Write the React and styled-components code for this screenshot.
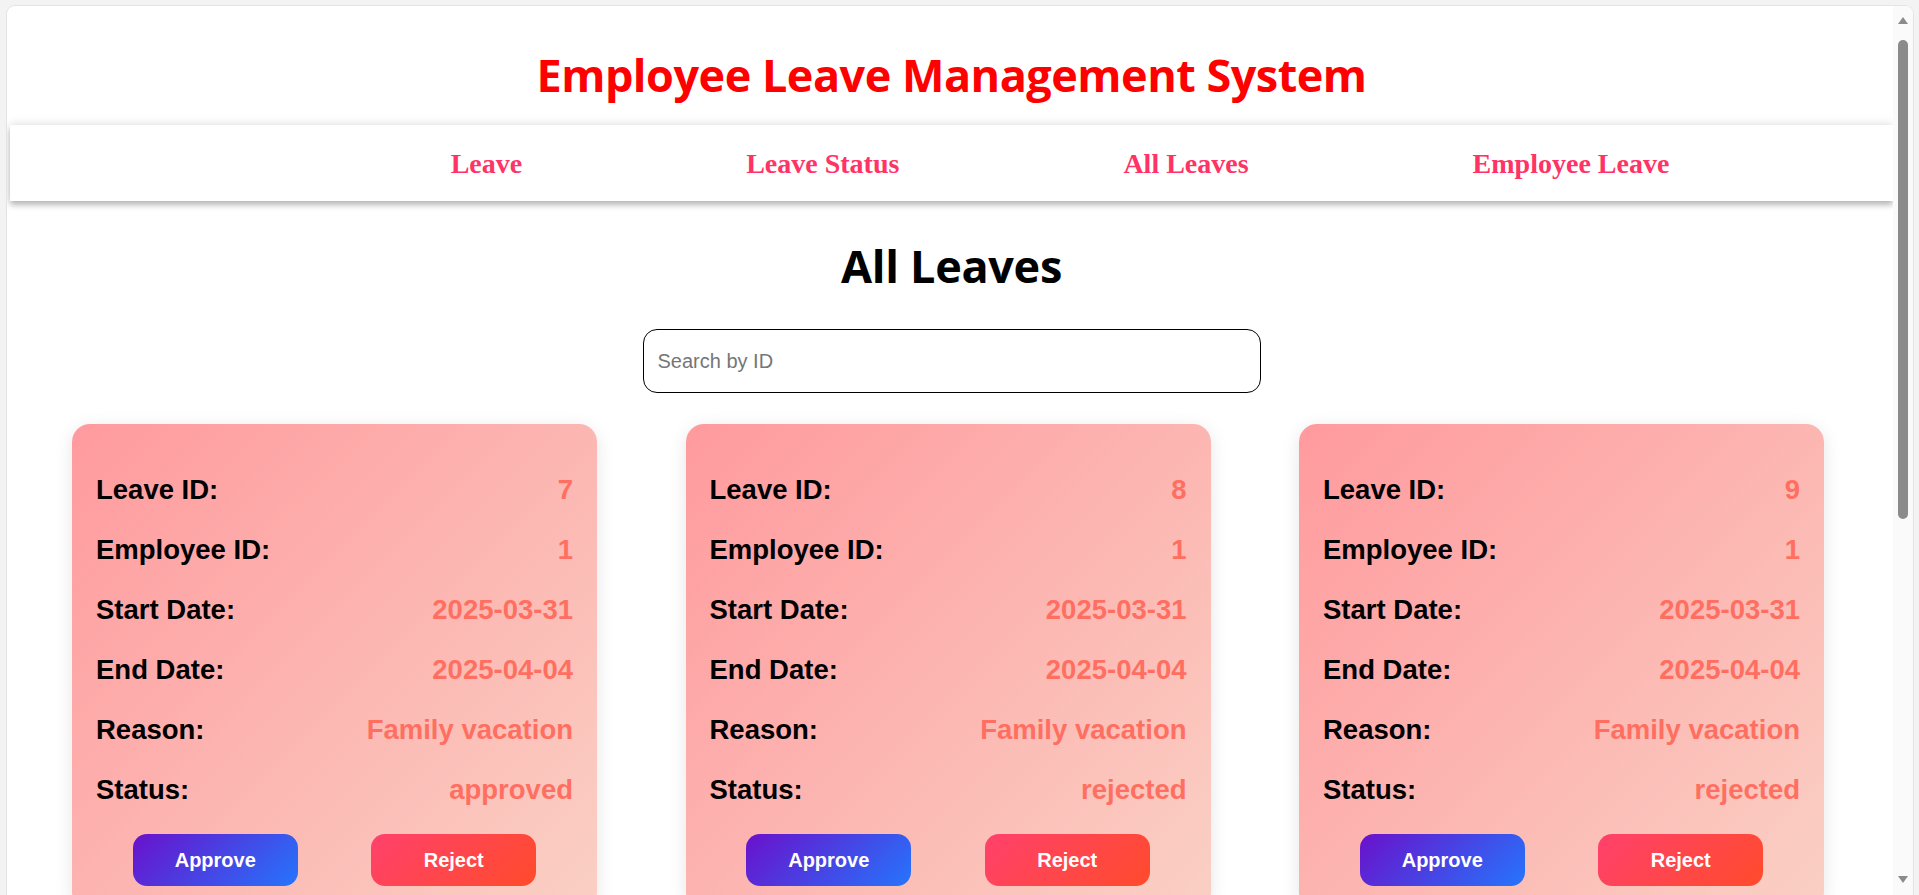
import React from "react";
import styled, { createGlobalStyle } from "styled-components";

const GlobalStyle = createGlobalStyle`
  html, body {
    margin: 0;
    padding: 0;
    height: 100%;
    overflow: hidden;
    background: #f3f3f3;
  }
  #root { height: 100%; }
  * { box-sizing: border-box; }
`;

const Frame = styled.div`
  margin: 5px 5px 0 6px;
  height: calc(100vh - 5px);
  display: flex;
  background: #ffffff;
  border: 1px solid #e4e4e4;
  border-bottom: none;
  border-radius: 9px 9px 0 0;
  overflow: hidden;
`;

const Viewport = styled.div`
  flex: 1;
  min-width: 0;
  height: 100%;
  overflow: hidden;
  padding-left: 3px;
`;

const ScrollRail = styled.div`
  width: 20px;
  flex: none;
  height: 100%;
  background: #fafafa;
  display: flex;
  flex-direction: column;
  align-items: center;
  padding: 11px 0 12px;
`;

const Arrow = styled.div`
  width: 0;
  height: 0;
  border-left: 5px solid transparent;
  border-right: 5px solid transparent;
  ${(p) =>
    p.$dir === "up"
      ? "border-bottom: 7px solid #8b8b8b;"
      : "border-top: 7px solid #8b8b8b; margin-top: auto;"}
`;

const Thumb = styled.div`
  margin-top: 16px;
  width: 10px;
  height: 479px;
  border-radius: 5px;
  background: #8b8b8b;
`;

const Header = styled.header`
  padding: 37px 0 18px;
  text-align: center;
`;

const Title = styled.h1`
  margin: 0;
  font-family: "Open Sans", "Noto Sans", sans-serif;
  font-weight: 700;
  font-size: 45px;
  letter-spacing: -0.5px;
  line-height: 64px;
  color: #ff0000;
`;

const Nav = styled.nav`
  height: 76px;
  display: flex;
  align-items: center;
  justify-content: center;
  gap: 224px;
  padding-left: 217px;
  padding-top: 2px;
  background: #ffffff;
  box-shadow: 0 4px 6px rgba(0, 0, 0, 0.28), 0 -3px 8px rgba(0, 0, 0, 0.08);
  position: relative;
`;

const NavLink = styled.a`
  font-family: "Liberation Serif", "Times New Roman", serif;
  font-weight: 700;
  font-size: 28px;
  color: #ff3366;
  text-decoration: none;
  cursor: pointer;
`;

const Main = styled.main`
  padding-top: 34px;
  display: flex;
  flex-direction: column;
  align-items: center;
`;

const Heading = styled.h2`
  margin: 0;
  font-family: "Open Sans", "Noto Sans", sans-serif;
  font-weight: 700;
  font-size: 45px;
  letter-spacing: -0.3px;
  line-height: 62px;
  color: #000000;
`;

const SearchInput = styled.input`
  margin: 32px 0 31px;
  width: 618px;
  height: 64px;
  padding: 0 14px;
  border: 1px solid #000000;
  border-radius: 14px;
  font-family: "Liberation Sans", Arial, sans-serif;
  font-size: 20px;
  color: #222;
  outline: none;
  &::placeholder {
    color: #767676;
  }
`;

const CardGrid = styled.div`
  align-self: stretch;
  display: grid;
  grid-template-columns: repeat(3, 525px);
  justify-content: space-between;
  row-gap: 40px;
  padding: 0 69px 0 62px;
`;

const Card = styled.div`
  padding: 24px;
  border-radius: 18px;
  background: linear-gradient(135deg, #ff9a9e 0%, #fad0c4 100%);
  box-shadow: 0 4px 18px rgba(0, 0, 0, 0.1);
  font-family: "Liberation Sans", Arial, sans-serif;
`;

const Rows = styled.div`
  padding-top: 26px;
  display: flex;
  flex-direction: column;
  gap: 28px;
`;

const Row = styled.div`
  display: flex;
  justify-content: space-between;
  align-items: center;
  font-size: 27.5px;
  line-height: 32px;
  font-weight: 700;
`;

const Label = styled.span`
  color: #000000;
`;

const Value = styled.span`
  color: #ff6f61;
  text-align: right;
`;

const Actions = styled.div`
  margin-top: 28px;
  display: flex;
  justify-content: space-around;
`;

const ActionButton = styled.button`
  width: 165px;
  height: 52px;
  border: none;
  border-radius: 14px;
  font-family: "Liberation Sans", Arial, sans-serif;
  font-weight: 700;
  font-size: 20px;
  color: #ffffff;
  cursor: pointer;
  background: ${(p) =>
    p.$variant === "approve"
      ? "linear-gradient(135deg, #6a11cb 0%, #2575fc 100%)"
      : "linear-gradient(135deg, #ff416c 0%, #ff4b2b 100%)"};
`;

const leaves = [
  { id: 7, emp: 1, start: "2025-03-31", end: "2025-04-04", reason: "Family vacation", status: "approved" },
  { id: 8, emp: 1, start: "2025-03-31", end: "2025-04-04", reason: "Family vacation", status: "rejected" },
  { id: 9, emp: 1, start: "2025-03-31", end: "2025-04-04", reason: "Family vacation", status: "rejected" },
];

const navItems = ["Leave", "Leave Status", "All Leaves", "Employee Leave"];

function LeaveCard({ leave }) {
  const fields = [
    ["Leave ID:", leave.id],
    ["Employee ID:", leave.emp],
    ["Start Date:", leave.start],
    ["End Date:", leave.end],
    ["Reason:", leave.reason],
    ["Status:", leave.status],
  ];
  return (
    <Card>
      <Rows>
        {fields.map(([label, value]) => (
          <Row key={label}>
            <Label>{label}</Label>
            <Value>{value}</Value>
          </Row>
        ))}
      </Rows>
      <Actions>
        <ActionButton $variant="approve">Approve</ActionButton>
        <ActionButton $variant="reject">Reject</ActionButton>
      </Actions>
    </Card>
  );
}

export default function App() {
  return (
    <>
      <GlobalStyle />
      <Frame>
        <Viewport>
          <Header>
            <Title>Employee Leave Management System</Title>
          </Header>
          <Nav>
            {navItems.map((n) => (
              <NavLink key={n}>{n}</NavLink>
            ))}
          </Nav>
          <Main>
            <Heading>All Leaves</Heading>
            <SearchInput placeholder="Search by ID" />
            <CardGrid>
              {leaves.map((l) => (
                <LeaveCard key={l.id} leave={l} />
              ))}
            </CardGrid>
          </Main>
        </Viewport>
        <ScrollRail>
          <Arrow $dir="up" />
          <Thumb />
          <Arrow $dir="down" />
        </ScrollRail>
      </Frame>
    </>
  );
}
